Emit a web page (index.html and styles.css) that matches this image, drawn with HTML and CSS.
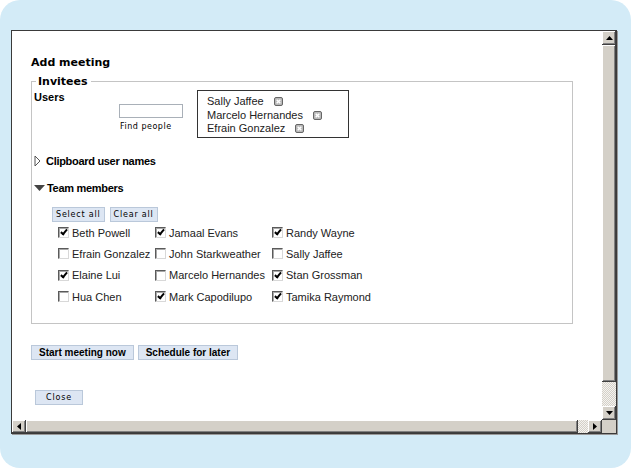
FILE: index.html
```html
<!DOCTYPE html>
<html lang="en">

<head>
    <meta charset="UTF-8" />
    <title>Add meeting</title>
    <link rel="stylesheet" href="styles.css">
</head>

<body>
    <div class="frame">
        <div class="window">
            <div class="viewport">
                <div class="page">
                    <h1 class="title">Add meeting</h1>

                    <fieldset class="invitees">
                        <legend>Invitees</legend>

                        <div class="users-row">
                            <div class="users-label">Users</div>
                            <div class="finder">
                                <input type="text" class="find-input" />
                                <div class="find-label">Find people</div>
                            </div>
                            <ul class="picked">
                                <li>Sally Jaffee <span class="remove"><svg viewBox="0 0 9 9" width="9" height="9"><rect x="0.5" y="0.5" width="8" height="8" rx="1.5" fill="#b9b9b9" stroke="#666"/><path d="M2.7 2.7 L6.3 6.3 M6.3 2.7 L2.7 6.3" stroke="#fff" stroke-width="1.4"/></svg></span></li>
                                <li>Marcelo Hernandes <span class="remove"><svg viewBox="0 0 9 9" width="9" height="9"><rect x="0.5" y="0.5" width="8" height="8" rx="1.5" fill="#b9b9b9" stroke="#666"/><path d="M2.7 2.7 L6.3 6.3 M6.3 2.7 L2.7 6.3" stroke="#fff" stroke-width="1.4"/></svg></span></li>
                                <li>Efrain Gonzalez <span class="remove"><svg viewBox="0 0 9 9" width="9" height="9"><rect x="0.5" y="0.5" width="8" height="8" rx="1.5" fill="#b9b9b9" stroke="#666"/><path d="M2.7 2.7 L6.3 6.3 M6.3 2.7 L2.7 6.3" stroke="#fff" stroke-width="1.4"/></svg></span></li>
                            </ul>
                        </div>

                        <div class="section">
                            <svg class="twisty" viewBox="0 0 7 12" width="7" height="12"><path d="M1 1 L6 6 L1 11 Z" fill="#fff" stroke="#555" stroke-width="1"/></svg>
                            Clipboard user names
                        </div>

                        <div class="section open">
                            <svg class="twisty" viewBox="0 0 11 6" width="11" height="6"><path d="M0 0 L11 0 L5.5 6 Z" fill="#444"/></svg>
                            Team members
                        </div>

                        <div class="team">
                            <div class="team-actions">
                                <button class="small">Select all</button>
                                <button class="small">Clear all</button>
                            </div>
                            <div class="members">
                                <label class="member"><span class="box checked"></span>Beth Powell</label>
                                <label class="member"><span class="box checked"></span>Jamaal Evans</label>
                                <label class="member"><span class="box checked"></span>Randy Wayne</label>
                                <label class="member"><span class="box"></span>Efrain Gonzalez</label>
                                <label class="member"><span class="box"></span>John Starkweather</label>
                                <label class="member"><span class="box"></span>Sally Jaffee</label>
                                <label class="member"><span class="box checked"></span>Elaine Lui</label>
                                <label class="member"><span class="box"></span>Marcelo Hernandes</label>
                                <label class="member"><span class="box checked"></span>Stan Grossman</label>
                                <label class="member"><span class="box"></span>Hua Chen</label>
                                <label class="member"><span class="box checked"></span>Mark Capodilupo</label>
                                <label class="member"><span class="box checked"></span>Tamika Raymond</label>
                            </div>
                        </div>
                    </fieldset>

                    <div class="actions">
                        <button class="big">Start meeting now</button>
                        <button class="big">Schedule for later</button>
                    </div>

                    <button class="small close">Close</button>
                </div>
            </div>

            <!-- fake scrollbars of the popup window -->
            <div class="vscroll">
                <div class="sb-btn"><svg viewBox="0 0 7 4" width="7" height="4"><path d="M0 4 L7 4 L3.5 0 Z" fill="#000"/></svg></div>
                <div class="sb-thumb"></div>
                <div class="sb-track"></div>
                <div class="sb-btn"><svg viewBox="0 0 7 4" width="7" height="4"><path d="M0 0 L7 0 L3.5 4 Z" fill="#000"/></svg></div>
            </div>
            <div class="hscroll">
                <div class="sb-btn"><svg viewBox="0 0 4 7" width="4" height="7"><path d="M4 0 L4 7 L0 3.5 Z" fill="#000"/></svg></div>
                <div class="sb-thumb"></div>
                <div class="sb-track"></div>
                <div class="sb-btn"><svg viewBox="0 0 4 7" width="4" height="7"><path d="M0 0 L0 7 L4 3.5 Z" fill="#000"/></svg></div>
            </div>
            <div class="corner"></div>
        </div>
    </div>
</body>

</html>
```

FILE: styles.css
```css
body {
    margin: 0;
    background: #ffffff;
    font-family: "Liberation Sans", Arial, sans-serif;
    font-size: 11px;
    color: #000;
}

.frame {
    width: 631px;
    height: 468px;
    box-sizing: border-box;
    padding: 30px 0 0 11px;
    background: #d3ebf7;
    border-radius: 20px;
}

.window {
    width: 606px;
    height: 404px;
    box-sizing: border-box;
    border: 1px solid #3a3a3a;
    box-shadow: 1px 1px 0 #9a9a9a;
    background: #fff;
    display: grid;
    grid-template-columns: 1fr 14px;
    grid-template-rows: 1fr 13px;
}

.viewport {
    overflow: hidden;
}

.page {
    padding: 25px 0 0 19px;
}

.title {
    margin: 0;
    font-family: "DejaVu Sans", Verdana, sans-serif;
    font-size: 11px;
    line-height: 13px;
    font-weight: bold;
}

/* Invitees */
.invitees {
    width: 542px;
    box-sizing: border-box;
    margin: 6px 0 0;
    padding: 0 2px 16px;
    border: 1px solid #c4c4c4;
}

.invitees legend {
    margin-left: 2px;
    padding: 0 3px 0 2px;
    font-family: "DejaVu Sans", Verdana, sans-serif;
    font-size: 11px;
    line-height: 13px;
    font-weight: bold;
}

.users-row {
    display: flex;
    margin-top: 2px;
}

.users-label {
    width: 85px;
    font-weight: bold;
    line-height: 14px;
}

.finder {
    width: 64px;
    margin: 14px 14px 0 0;
}

.find-input {
    display: block;
    width: 64px;
    height: 14px;
    box-sizing: border-box;
    margin: 0;
    padding: 0;
    border: 1px solid #a9b0b8;
}

.find-label {
    margin: 4px 0 0 1px;
    font-family: "DejaVu Sans", Verdana, sans-serif;
    font-size: 8px;
    letter-spacing: 0.5px;
    white-space: nowrap;
}

.picked {
    list-style: none;
    width: 152px;
    height: 48px;
    box-sizing: border-box;
    margin: 0;
    padding: 4px 0 0 9px;
    border: 1px solid #333;
    line-height: 13.5px;
    color: #222;
}

.remove {
    display: inline-block;
    margin-left: 7px;
    vertical-align: -1px;
    line-height: 0;
}

.section {
    display: flex;
    align-items: center;
    gap: 5px;
    margin-top: 16px;
    font-weight: bold;
    letter-spacing: -0.3px;
    line-height: 14px;
}

.section.open {
    gap: 2px;
    margin-top: 13px;
}

.twisty {
    flex: none;
}

.team {
    margin: 12px 0 0 18px;
}

.team-actions {
    display: flex;
    gap: 5px;
}

button {
    margin: 0;
    padding: 0;
    background: #dde6f3;
    border: 1px solid #bac8da;
    color: #000;
    cursor: pointer;
}

button.small {
    height: 15px;
    padding: 0 3px;
    font-family: "DejaVu Sans", Verdana, sans-serif;
    font-size: 8px;
    letter-spacing: 0.8px;
}

.members {
    display: grid;
    grid-template-columns: 97px 117px auto;
    grid-auto-rows: 21.3px;
    margin-left: 6px;
}

.member {
    display: flex;
    align-items: center;
    gap: 3px;
    white-space: nowrap;
    color: #222;
}

.box {
    position: relative;
    width: 11px;
    height: 11px;
    box-sizing: border-box;
    border-top: 1px solid #5a5a5a;
    border-left: 1px solid #5a5a5a;
    border-right: 1px solid #d8d8d8;
    border-bottom: 1px solid #d8d8d8;
    box-shadow: inset 1px 1px 0 #a8a8a8;
    background: #fff;
}

.box.checked::after {
    content: "";
    position: absolute;
    left: 3px;
    top: 0;
    width: 2px;
    height: 5px;
    border-right: 2px solid #000;
    border-bottom: 2px solid #000;
    transform: rotate(40deg);
}

.actions {
    display: flex;
    gap: 4px;
    margin-top: 21px;
}

button.big {
    height: 15px;
    padding: 0 7px;
    font-family: "Liberation Sans", Arial, sans-serif;
    font-size: 10px;
    font-weight: bold;
}

.close {
    display: block;
    width: 48px;
    height: 16px;
    margin: 30px 0 0 4px;
}

/* Scrollbars */
.vscroll,
.hscroll {
    display: flex;
    background: #d4d0c8;
}

.vscroll {
    flex-direction: column;
    grid-column: 2;
    grid-row: 1;
}

.hscroll {
    grid-column: 1;
    grid-row: 2;
}

.sb-btn {
    flex: none;
    width: 14px;
    height: 14px;
    box-sizing: border-box;
    display: flex;
    align-items: center;
    justify-content: center;
    background: #d4d0c8;
    box-shadow: inset -1px -1px 0 #404040, inset 1px 1px 0 #fff, inset -2px -2px 0 #808080;
}

.hscroll .sb-btn {
    height: 13px;
}

.sb-thumb {
    flex: 1;
    background: #d4d0c8;
    box-shadow: inset -1px -1px 0 #404040, inset 1px 1px 0 #fff, inset -2px -2px 0 #808080;
}

.sb-track {
    flex: none;
    background: repeating-conic-gradient(#d4d0c8 0 25%, #f4f3f0 0 50%) 0 0 / 2px 2px;
}

.vscroll .sb-track {
    height: 24px;
}

.hscroll .sb-track {
    width: 10px;
}

.corner {
    grid-column: 2;
    grid-row: 2;
    background: #d4d0c8;
}
```
